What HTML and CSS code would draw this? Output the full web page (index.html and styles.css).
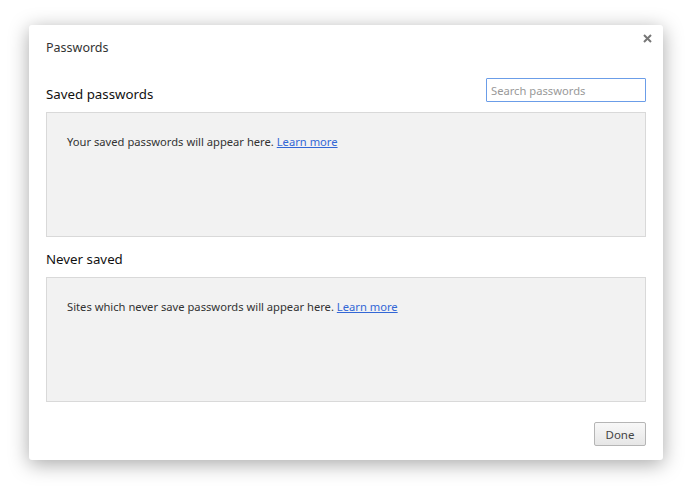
FILE: index.html
```html
<!DOCTYPE html>
<html lang="en">
<head>
    <meta charset="UTF-8">
    <title>Passwords</title>
    <link rel="stylesheet" href="styles.css">
</head>
<body>

    <div class="dialog">
        <button class="close-btn" title="Close">
            <svg width="9" height="9" viewBox="0 0 9 9">
                <path d="M1 1 L8 8 M8 1 L1 8" stroke="#777" stroke-width="2"/>
            </svg>
        </button>
        <h1 class="titulo">Passwords</h1>

        <div class="cabecalho">
            <h2>Saved passwords</h2>
            <input type="search" class="busca" placeholder="Search passwords">
        </div>
        <div class="lista">
            Your saved passwords will appear here. <a href="#">Learn more</a>
        </div>

        <div class="cabecalho">
            <h2>Never saved</h2>
        </div>
        <div class="lista">
            Sites which never save passwords will appear here. <a href="#">Learn more</a>
        </div>

        <div class="rodape">
            <button class="btn-done">Done</button>
        </div>
    </div>

</body>
</html>
```

FILE: styles.css
```css
* {
    margin: 0;
    padding: 0;
    box-sizing: border-box;
}
html, body {
    height: 100%;
}
body {
    background-color: #fff;
    font-family: 'Segoe UI', 'Noto Sans', 'Open Sans', sans-serif;
    padding: 25px 0 0 29px;
    color: #333;
}
.dialog {
    position: relative;
    width: 634px;
    height: 435px;
    background-color: #fff;
    border-radius: 3px;
    box-shadow: 0 4px 20px rgba(0, 0, 0, 0.35);
    padding: 14px 17px 14px 17px;
    display: flex;
    flex-direction: column;
}
.close-btn {
    position: absolute;
    top: 9px;
    right: 11px;
    width: 9px;
    height: 9px;
    border: none;
    background: none;
    cursor: pointer;
    display: flex;
}
.titulo {
    font-size: 12.5px;
    font-weight: normal;
    line-height: 18px;
    color: #333;
    margin-bottom: 21px;
}
.cabecalho {
    display: flex;
    justify-content: space-between;
    align-items: flex-end;
    height: 24px;
    flex-shrink: 0;
    margin-bottom: 10px;
}
.cabecalho h2 {
    font-size: 13.3px;
    font-weight: normal;
    line-height: 18px;
    color: #111;
    margin-bottom: -1px;
}
.busca {
    width: 160px;
    height: 24px;
    border: 1px solid #6b9de8;
    border-radius: 1px;
    padding: 0 4px;
    font-family: inherit;
    font-size: 11.2px;
    outline: none;
}
.busca::placeholder {
    color: #999;
}
.lista {
    height: 125px;
    flex-shrink: 0;
    background-color: #f2f2f2;
    border: 1px solid #d9d9d9;
    padding: 21px 20px;
    font-size: 11.2px;
    line-height: 16px;
    color: #333;
    margin-bottom: 6px;
}
.lista a {
    color: #3367d6;
}
.rodape {
    margin-top: auto;
    display: flex;
    justify-content: flex-end;
}
.btn-done {
    width: 52px;
    height: 24px;
    border: 1px solid #b5b5b5;
    border-radius: 2px;
    background: linear-gradient(#f8f8f8, #e6e6e6);
    font-family: inherit;
    font-size: 11.5px;
    color: #444;
    cursor: pointer;
}
```
